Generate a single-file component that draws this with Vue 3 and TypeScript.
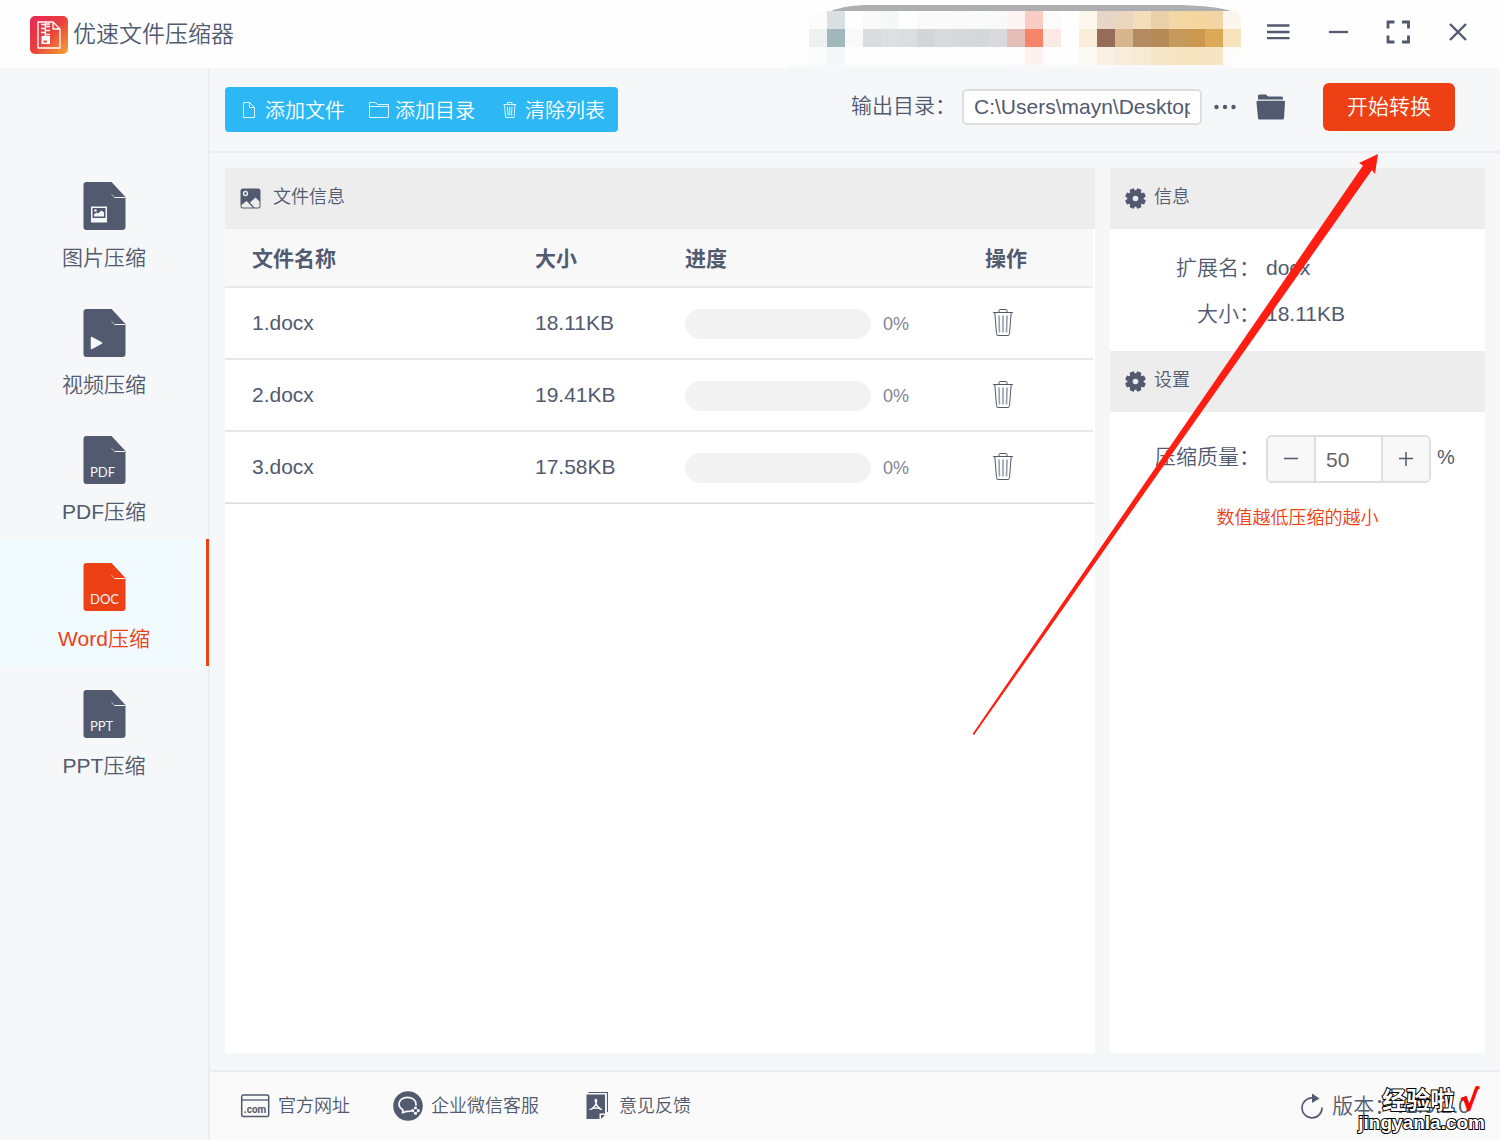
<script setup lang="ts">
import { ref } from 'vue'

interface NavItem {
  id: string
  label: string
  tag?: string
}

interface FileRow {
  name: string
  size: string
  progress: number
}

const navItems: NavItem[] = [
  { id: 'image', label: '图片压缩' },
  { id: 'video', label: '视频压缩' },
  { id: 'pdf', label: 'PDF压缩', tag: 'PDF' },
  { id: 'word', label: 'Word压缩', tag: 'DOC' },
  { id: 'ppt', label: 'PPT压缩', tag: 'PPT' },
]

const files = ref<FileRow[]>([
  { name: '1.docx', size: '18.11KB', progress: 0 },
  { name: '2.docx', size: '19.41KB', progress: 0 },
  { name: '3.docx', size: '17.58KB', progress: 0 },
])

const active = ref('word')
const outputDir = ref('C:\\Users\\mayn\\Desktop\\output')
const quality = ref(50)

const removeFile = (index: number) => files.value.splice(index, 1)

// Pixelated account area in the title bar, one colour per 18px cell
const mosaic: string[][] = [
  ['#fcfcfb', '#dadfe2', '#fefefe', '#f9f9f9', '#f6f8f7', '#fefefe', '#fafafa', '#fafafa', '#f9f9f9', '#fafafa', '#f8f9f9', '#fdf4f3', '#f9cdc4', '#fcfbf9', '#fefefe', '#fcf8ee', '#e7d6c8', '#ebd7c0', '#f2deba', '#ead1a9', '#f3d8a4', '#f4d69e', '#f2d5a2', '#fcf6ef'],
  ['#edf2f1', '#a0b7bc', '#f9f9f9', '#dadbdf', '#dedfe3', '#dcdde1', '#d4d5d9', '#d9dade', '#d7d8dc', '#d5d7db', '#d8dade', '#e4beb7', '#f58468', '#fbe9e5', '#fefefe', '#faeed8', '#976b59', '#d7b58e', '#b48b61', '#b48a57', '#c69a5a', '#ca984f', '#dba957', '#f9e3bd'],
  ['#fafbfb', '#f3f7f9', '#fefefe', '#fefefe', '#fefefe', '#fefefe', '#fefefe', '#fefefe', '#fefefe', '#fefefe', '#fefefe', '#fdfdfd', '#fdf2f0', '#fefefe', '#fefefe', '#fcfaf5', '#faf0e4', '#f9ecda', '#f8ebd3', '#f6e7cb', '#f5e5c2', '#f5e5c1', '#f6e5c5', '#fdfcf8'],
]

const gearAngles = [22.5, 67.5, 112.5, 157.5]
</script>

<template>
  <div class="app">
    <header class="titlebar">
      <div class="brand">
        <svg class="logo" width="38" height="38" viewBox="0 0 38 38" aria-hidden="true">
          <defs>
            <linearGradient id="logoFill" x1="0" y1="0" x2="1" y2="1">
              <stop offset="0" stop-color="#e8265a" />
              <stop offset="0.5" stop-color="#e8413c" />
              <stop offset="1" stop-color="#f6a62f" />
            </linearGradient>
          </defs>
          <rect width="38" height="38" rx="5" fill="url(#logoFill)" />
          <path d="M8 6H23L30 13V32H8Z M23 6V13H30" fill="none" stroke="#fff" stroke-width="1.300" stroke-linejoin="round" />
          <path d="M11 8.500H15.500 M15 10.500H20 M11 12.500H15.500 M15 14.500H20 M11 16.500H15.500 M15 18.500H20 M15 8H20" stroke="#fff" stroke-width="1.400" />
          <path d="M15.300 7V20" stroke="#fff" stroke-width="1.200" />
          <path d="M11.500 20H20V28H11.500Z M13.500 24.500H17V26.500H13.500Z" fill="#fff" fill-rule="evenodd" />
        </svg>
        <h1 class="title">优速文件压缩器</h1>
      </div>
      <div class="window-area">
        <svg class="mosaic" width="456" height="68" viewBox="0 0 456 68" aria-hidden="true">
          <defs>
            <clipPath id="mosaicClip"><rect x="0" y="4" width="455" height="62" rx="18" /></clipPath>
          </defs>
          <path d="M0 65H450L444 68H4Z" fill="#f7f9fb" />
          <path d="M45 11C55 7 68 5 84 5H396C422 6 436 8 445 11Z" fill="#aeafb3" />
          <g clip-path="url(#mosaicClip)" shape-rendering="crispEdges">
            <template v-for="(row, r) in mosaic" :key="r">
              <rect v-for="(c, i) in row" :key="i" :x="23 + i * 18" :y="11 + r * 18" width="18" height="18" :fill="c" />
            </template>
          </g>
        </svg>
        <div class="window-buttons">
          <button type="button" aria-label="菜单">
            <svg width="24" height="24" viewBox="0 0 24 24"><path d="M1 5.500H23.500M1 12H23.500M1 18.200H23.500" stroke="currentColor" stroke-width="2.300" /></svg>
          </button>
          <button type="button" aria-label="最小化">
            <svg width="24" height="24" viewBox="0 0 24 24"><path d="M3 12H22" stroke="currentColor" stroke-width="2.300" /></svg>
          </button>
          <button type="button" aria-label="最大化">
            <svg width="24" height="24" viewBox="0 0 24 24"><path d="M8.500 2H2V8.500M16 2H22.500V8.500M22.500 15.500V22H16M8.500 22H2V15.500" fill="none" stroke="currentColor" stroke-width="2.800" /></svg>
          </button>
          <button type="button" aria-label="关闭">
            <svg width="24" height="24" viewBox="0 0 24 24"><path d="M4 4L20 20M20 4L4 20" stroke="currentColor" stroke-width="2.400" /></svg>
          </button>
        </div>
      </div>
    </header>

    <div class="body">
      <nav class="sidebar">
        <button
          v-for="item in navItems"
          :key="item.id"
          type="button"
          class="nav-item"
          :class="{ active: active === item.id }"
          @click="active = item.id"
        >
          <svg width="43" height="48" viewBox="0 0 43 48" aria-hidden="true">
            <path d="M3.500 0H28.500L42.500 15V45A3 3 0 0 1 39.500 48H3.500A3 3 0 0 1 0.500 45V3A3 3 0 0 1 3.500 0Z" fill="currentColor" />
            <path d="M28.500 12Q29.500 14.500 31.500 15" fill="none" stroke="#f5f7f9" stroke-width="0.500" />
            <path d="M31.500 15.500H42" fill="none" stroke="#f5f7f9" />
            <g v-if="item.id === 'image'">
              <rect x="8" y="24.500" width="16" height="16" fill="#f5f7f9" />
              <rect x="9.500" y="26" width="13" height="10" fill="currentColor" />
              <path d="M11 34.500V32.500L13.500 30.500L15 31.500L18.500 28.500L21 30.500V34.500Z" fill="#f5f7f9" />
              <circle cx="12.500" cy="28.500" r="1.200" fill="#f5f7f9" />
            </g>
            <path v-else-if="item.id === 'video'" d="M8.500 28.500L18.500 34L8.500 39.500Z" fill="#f5f7f9" stroke="#f5f7f9" stroke-linejoin="round" stroke-width="1.500" />
            <text v-else x="7" y="41" class="doc-tag">{{ item.tag }}</text>
          </svg>
          <span>{{ item.label }}</span>
        </button>
      </nav>

      <main class="main">
        <div class="toolbar">
          <div class="actions">
            <button type="button">
              <svg width="20" height="20" viewBox="0 0 20 20" aria-hidden="true"><path d="M4.500 2.500H10.500L15.500 7.500V17.500H4.500Z M10.500 2.500V7.500H15.500" fill="none" stroke="#fff" opacity="0.850" /></svg>
              <span>添加文件</span>
            </button>
            <button type="button">
              <svg width="20" height="20" viewBox="0 0 20 20" aria-hidden="true"><path d="M0.500 17.500V2.500H6.500L8.500 4.500H19.500V17.500Z M0.500 6.500H19.500" fill="none" stroke="#fff" opacity="0.850" /></svg>
              <span>添加目录</span>
            </button>
            <button type="button">
              <svg width="20" height="20" viewBox="0 0 20 20" aria-hidden="true"><path d="M4.500 4.500H17 M8.500 4.500V2.500H13V4.500 M5.500 4.500L6.500 17.500H15L16 4.500 M8.500 6.500L9 15.500 M10.750 6.500V15.500 M13 6.500L12.500 15.500" fill="none" stroke="#fff" opacity="0.850" /></svg>
              <span>清除列表</span>
            </button>
          </div>
          <div class="output">
            <label for="output-dir">输出目录：</label>
            <input id="output-dir" v-model="outputDir" type="text" />
            <button type="button" class="icon-button more" aria-label="更多">
              <svg width="22" height="24" viewBox="0 0 22 24"><circle cx="2.500" cy="12" r="2.200" fill="currentColor" /><circle cx="11" cy="12" r="2.200" fill="currentColor" /><circle cx="19.500" cy="12" r="2.200" fill="currentColor" /></svg>
            </button>
            <button type="button" class="icon-button folder" aria-label="打开目录">
              <svg width="30" height="26" viewBox="0 0 30 26"><path d="M2 5.500V2Q2 0.500 3.500 0.500H9.500Q10.500 0.500 11 1.500Q11.500 2.500 12.500 2.500H25.500Q27 2.500 27 4V5.500Z" fill="currentColor" /><path d="M1.500 6.700H28Q29.300 6.700 29 8.500L28 24Q28 25.500 26.500 25.500H3.500Q2 25.500 2 24L0.500 8.500Q0.400 6.700 1.500 6.700Z" fill="currentColor" /></svg>
            </button>
            <button type="button" class="start">开始转换</button>
          </div>
        </div>

        <div class="content">
          <section class="panel files">
            <h2 class="panel-head">
              <svg width="21" height="21" viewBox="0 0 21 21" aria-hidden="true">
                <rect x="0.500" y="0.500" width="20" height="20" rx="2.500" fill="currentColor" />
                <circle cx="5.500" cy="5.500" r="2" fill="none" stroke="#ededed" stroke-width="1.300" />
                <path d="M1.500 17L6.500 13L13 19.500H3Q1.500 19.500 1.500 18Z M10 14.500L15.500 9.500L19.500 13.500V18Q19.500 19.500 18 19.500H14.500Z" fill="#ededed" />
              </svg>
              <span class="head-wide">文件信息</span>
            </h2>
            <div class="table-wrap">
              <table>
                <colgroup>
                  <col />
                  <col class="col-size" />
                  <col class="col-progress" />
                  <col class="col-action" />
                </colgroup>
                <thead>
                  <tr>
                    <th scope="col">文件名称</th>
                    <th scope="col">大小</th>
                    <th scope="col">进度</th>
                    <th scope="col">操作</th>
                  </tr>
                </thead>
                <tbody>
                  <tr v-for="(file, index) in files" :key="file.name">
                    <td>{{ file.name }}</td>
                    <td>{{ file.size }}</td>
                    <td>
                      <div class="progress">
                        <div class="track" role="progressbar" :aria-valuenow="file.progress" :aria-label="file.name">
                          <div class="fill" :style="{ width: file.progress + '%' }"></div>
                        </div>
                        <span>{{ file.progress }}%</span>
                      </div>
                    </td>
                    <td>
                      <button type="button" class="trash" aria-label="删除" @click="removeFile(index)">
                        <svg width="20" height="28" viewBox="0 0 20 28" fill="none" stroke="currentColor">
                          <path d="M0 3.500H20 M6 3.500V1.500Q6 0.500 7 0.500H13Q14 0.500 14 1.500V3.500" />
                          <path d="M1.800 3.500L3.500 24.500Q3.700 26.500 5 26.500H15Q16.300 26.500 16.500 24.500L18.200 3.500" />
                          <path d="M6 6.500L6.500 23.500 M10 6.500V23.500 M14 6.500L13.500 23.500" opacity="0.600" stroke-width="1.600" />
                        </svg>
                      </button>
                    </td>
                  </tr>
                </tbody>
              </table>
            </div>
          </section>

          <aside class="panel side">
            <h2 class="panel-head">
              <svg width="21" height="21" viewBox="-10.500 -10.500 21 21" aria-hidden="true">
                <rect v-for="a in gearAngles" :key="a" x="-2.400" y="-10.300" width="4.800" height="20.600" rx="1" fill="currentColor" :transform="`rotate(${a})`" />
                <circle r="8.200" fill="currentColor" />
                <circle r="2.800" fill="#ededed" />
              </svg>
              <span>信息</span>
            </h2>
            <dl class="info">
              <div><dt>扩展名：</dt><dd>docx</dd></div>
              <div><dt>大小：</dt><dd>18.11KB</dd></div>
            </dl>
            <h2 class="panel-head">
              <svg width="21" height="21" viewBox="-10.500 -10.500 21 21" aria-hidden="true">
                <rect v-for="a in gearAngles" :key="a" x="-2.400" y="-10.300" width="4.800" height="20.600" rx="1" fill="currentColor" :transform="`rotate(${a})`" />
                <circle r="8.200" fill="currentColor" />
                <circle r="2.800" fill="#ededed" />
              </svg>
              <span>设置</span>
            </h2>
            <div class="setting">
              <label for="quality">压缩质量：</label>
              <div class="stepper">
                <button type="button" aria-label="减少" @click="quality--">
                  <svg width="16" height="16" viewBox="0 0 16 16"><path d="M1 7.500H15" stroke="currentColor" stroke-width="1.500" /></svg>
                </button>
                <input id="quality" v-model.number="quality" type="text" />
                <button type="button" aria-label="增加" @click="quality++">
                  <svg width="16" height="16" viewBox="0 0 16 16"><path d="M1 7.500H15M8 1V15" stroke="currentColor" stroke-width="1.500" /></svg>
                </button>
              </div>
              <span class="unit">%</span>
            </div>
            <p class="note">数值越低压缩的越小</p>
          </aside>
        </div>

        <footer class="footer">
          <div class="links">
            <a href="#site">
              <svg width="30" height="30" viewBox="0 0 30 30" aria-hidden="true">
                <rect x="1.700" y="4" width="27" height="21.500" rx="1.500" fill="none" stroke="currentColor" stroke-width="1.500" />
                <path d="M2 9H28.500" stroke="currentColor" stroke-width="1.300" />
                <text x="15" y="22" class="com-tag">.com</text>
              </svg>
              <span>官方网址</span>
            </a>
            <a href="#service">
              <svg width="30" height="30" viewBox="0 0 30 30" aria-hidden="true">
                <circle cx="15" cy="15" r="14.800" fill="currentColor" />
                <path d="M19 19.500Q17 20.700 13.500 20.400L9.500 21.800L10 19Q6 16.500 6 13C6 9 10 6.300 14.500 6.300S23 9 23 13Q23 14 22.700 14.800" fill="none" stroke="#fafafa" stroke-width="1.700" stroke-linejoin="round" />
                <g fill="#fafafa"><circle cx="22.500" cy="17" r="1.600" /><circle cx="22.500" cy="22.200" r="1.600" /><circle cx="19.800" cy="19.600" r="1.600" /><circle cx="25.200" cy="19.600" r="1.600" /></g>
                <circle cx="22.500" cy="19.600" r="1.300" fill="currentColor" />
              </svg>
              <span>企业微信客服</span>
            </a>
            <a href="#feedback" class="feedback">
              <svg width="22" height="30" viewBox="0 0 22 30" aria-hidden="true">
                <path d="M2.500 1.500H21.500V21" fill="none" stroke="currentColor" stroke-width="1.200" />
                <path d="M0.500 3.500H19V22.500H13.500V28H0.500Z" fill="currentColor" />
                <path d="M15 28V24H19Z" fill="currentColor" />
                <path d="M10 8.500Q8.500 8.500 9.700 11.500Q11 16 15.500 18.500Q10 15.500 4 18.500Q8.500 17 10.200 12Q11.200 8.500 10 8.500Z" fill="none" stroke="#fafafa" stroke-width="1.300" stroke-linejoin="round" />
              </svg>
              <span>意见反馈</span>
            </a>
          </div>
          <div class="version">
            <svg width="24" height="26" viewBox="0 0 24 26" aria-hidden="true">
              <path d="M13.500 5A10 10 0 1 0 22 14.500" fill="none" stroke="currentColor" stroke-width="1.600" />
              <path d="M12 0.500L19.500 5.500L12 10Z" fill="currentColor" />
            </svg>
            <span>版本：v2.0.2.0</span>
          </div>
        </footer>
      </main>
    </div>

    <svg class="arrow" width="1400" height="740" viewBox="0 0 1400 740" aria-hidden="true">
      <polygon points="1378,154 1375,174 1372,170 974,735 972.500,734 1363,165.500 1359,163" fill="#ff1e12" />
    </svg>

    <div class="watermark">
      <div class="mark-top"><span>经验啦</span><span class="tick">√</span></div>
      <div class="mark-bottom">jingyanla.com</div>
    </div>
  </div>
</template>

<style>
body {
  margin: 0;
}
</style>

<style scoped>
.app {
  position: relative;
  display: flex;
  flex-direction: column;
  min-height: 100vh;
  overflow: hidden;
  background: #f5f7f9;
  color: #515a6e;
  font-family: "Liberation Sans", "Noto Sans CJK SC", sans-serif;
  font-weight: 350;
  font-size: 21px;
  line-height: 30px;
}

button,
input {
  box-sizing: border-box;
  margin: 0;
  padding: 0;
  border: 0;
  background: none;
  color: inherit;
  font: inherit;
}

button {
  cursor: pointer;
}

svg {
  display: block;
  flex: none;
}

.titlebar {
  display: flex;
  justify-content: space-between;
  align-items: center;
  height: 68px;
  padding: 0 26px 0 30px;
  background: #fefefe;
}

.brand {
  display: flex;
  align-items: center;
  gap: 5px;
}

.logo {
  margin-top: 2px;
}

.title {
  margin: 0;
  font-size: 23px;
  font-weight: 350;
}

.window-area,
.window-buttons {
  display: flex;
  align-items: center;
}

.window-area {
  gap: 24px;
}

.window-buttons {
  gap: 36px;
  padding-bottom: 4px;
  padding-right: 4px;
}

.body {
  flex: 1;
  display: flex;
}

.sidebar {
  box-sizing: border-box;
  flex: none;
  width: 210px;
  padding-top: 90px;
  border-right: 2px solid #ebedf0;
}

.nav-item {
  display: flex;
  flex-direction: column;
  align-items: center;
  gap: 13px;
  width: 209px;
  height: 127px;
  padding: 24px 0 0 2px;
  border-right: 3px solid transparent;
}

.nav-item.active {
  background: #f0faff;
  border-right-color: #ed4014;
  color: #ed4014;
}

.doc-tag {
  fill: #f5f7f9;
  font-family: Lato, sans-serif;
  font-size: 13px;
  font-weight: 400;
}

.main {
  flex: 1;
  display: flex;
  flex-direction: column;
  min-width: 0;
}

.toolbar {
  display: flex;
  justify-content: space-between;
  align-items: center;
  height: 83px;
  padding: 0 45px 0 15px;
  border-bottom: 2px solid #ebedf0;
}

.actions {
  display: flex;
  align-items: center;
  gap: 24px;
  height: 45px;
  padding: 0 13px 0 14px;
  border-radius: 4px;
  background: #2db7f5;
  color: #fff;
  font-size: 20px;
}

.actions button {
  display: flex;
  align-items: center;
  gap: 6px;
}

.actions span {
  padding-top: 2px;
}

.output {
  display: flex;
  align-items: center;
  padding-bottom: 5px;
}

.output label {
  margin-right: 6px;
  padding-bottom: 3px;
}

.output input {
  width: 240px;
  height: 36px;
  padding: 0 10px;
  border: 2px solid #dcdee2;
  border-radius: 5px;
  background: #fff;
}

.more {
  margin-left: 12px;
}

.folder {
  margin-left: 20px;
}

.start {
  width: 132px;
  height: 48px;
  margin-left: 37px;
  border-radius: 6px;
  background: #ed4014;
  color: #fff;
}

.content {
  flex: 1;
  display: flex;
  gap: 15px;
  padding: 15px 15px 17px;
}

.panel {
  background: #fff;
}

.files {
  flex: 1;
  min-width: 0;
}

.side {
  flex: none;
  width: 375px;
}

.panel-head {
  display: flex;
  align-items: center;
  gap: 8px;
  height: 61px;
  margin: 0;
  padding-left: 15px;
  background: #ededed;
  font-size: 18px;
  font-weight: 350;
}

.panel-head span {
  padding-bottom: 4px;
}

.panel-head .head-wide {
  padding-left: 4px;
}

.table-wrap {
  border-bottom: 1px solid #dcdee2;
}

table {
  width: calc(100% - 2px);
  border-collapse: separate;
  border-spacing: 0;
  table-layout: fixed;
}

.col-size {
  width: 150px;
}

.col-progress {
  width: 300px;
}

.col-action {
  width: 135px;
}

th,
td {
  box-sizing: border-box;
  padding: 0 0 0 27px;
  border-bottom: 2px solid #e8e8ea;
  text-align: left;
}

th {
  height: 59px;
  padding-top: 2px;
  background: #f8f8f9;
  font-weight: 700;
}

td {
  height: 72px;
}

tbody tr:last-child td {
  height: 71px;
  border-bottom-width: 1px;
}

.progress {
  display: flex;
  align-items: center;
  gap: 12px;
  padding-top: 2px;
  color: #808695;
  font-size: 18px;
}

.track {
  width: 186px;
  height: 30px;
  border-radius: 15px;
  background: #f3f3f3;
  overflow: hidden;
}

.fill {
  height: 100%;
  background: #2db7f5;
}

.trash {
  display: block;
  margin-left: 8px;
}

.info {
  margin: 0;
  padding: 16px 0 14px;
}

.info div {
  display: flex;
  height: 46px;
  align-items: center;
}

.info dt,
.setting label {
  flex: none;
  width: 150px;
  text-align: right;
}

.info dd {
  margin: 0 0 0 6px;
}

.setting {
  display: flex;
  align-items: center;
  padding-top: 23px;
}

.setting label,
.unit {
  padding-bottom: 4px;
}

.unit {
  font-size: 20px;
}

.stepper {
  display: flex;
  box-sizing: border-box;
  width: 165px;
  height: 48px;
  margin: 0 6px;
  border: 2px solid #dcdee2;
  border-radius: 6px;
  overflow: hidden;
}

.stepper button {
  display: flex;
  flex: none;
  align-items: center;
  justify-content: center;
  width: 46px;
  background: #f8f8f9;
}

.stepper input {
  flex: 1;
  min-width: 0;
  padding: 2px 0 0 10px;
  border: solid #dcdee2;
  border-width: 0 2px;
  color: #666;
}

.note {
  margin: 20px 0 0;
  color: #ed4014;
  font-size: 18px;
  text-align: center;
}

.footer {
  display: flex;
  justify-content: space-between;
  align-items: center;
  height: 68px;
  padding: 0 30px;
  border-top: 2px solid #ebedf0;
  background: #fafafa;
}

.links {
  display: flex;
  gap: 43px;
  font-size: 18px;
}

.links a {
  display: flex;
  align-items: center;
  gap: 8px;
  color: inherit;
  text-decoration: none;
}

.links .feedback {
  gap: 11px;
  padding-left: 4px;
}

.com-tag {
  fill: currentColor;
  font-family: Roboto, sans-serif;
  font-size: 10px;
  font-weight: 700;
  text-anchor: middle;
}

.version {
  display: flex;
  align-items: center;
  gap: 8px;
}

.arrow {
  position: absolute;
  top: 0;
  left: 0;
  pointer-events: none;
}

.watermark {
  position: absolute;
  right: 15px;
  bottom: 7px;
  color: #fff;
  font-weight: 700;
  text-align: right;
  pointer-events: none;
  -webkit-text-stroke: 2px #000;
  paint-order: stroke fill;
}

.mark-top {
  display: flex;
  justify-content: flex-end;
  gap: 6px;
  padding-right: 6px;
  font-size: 24px;
  line-height: 24px;
}

.tick {
  color: #f00;
  font-family: "DejaVu Sans", sans-serif;
  font-size: 28px;
  -webkit-text-stroke: 1px #f00;
}

.mark-bottom {
  font-size: 19px;
  line-height: 20px;
}
</style>
